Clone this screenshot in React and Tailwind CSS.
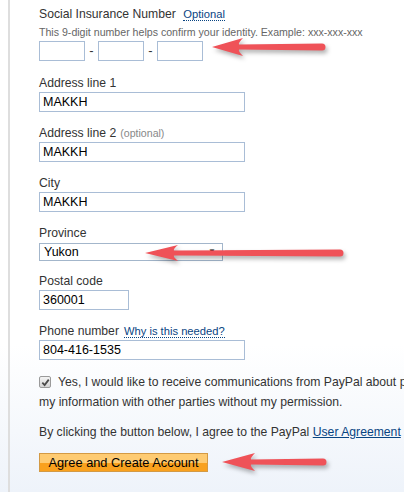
function Arrow({ tip, y, tail, len = 31, half = 9 }) {
  const b = tip + len;
  const d = `M${tip} ${y} L${b} ${y - half} Q${b - 5} ${y - 4} ${b - 4} ${y - 2.5} L${tail} ${y - 3.5} A3.5 3.5 0 0 1 ${tail} ${y + 3.5} L${b - 4} ${y + 2.5} Q${b - 5} ${y + 4} ${b} ${y + half} Z`;
  return <path d={d} fill="#ef5258" />;
}

function Field({ label, extra, value, width, className = "" }) {
  return (
    <div className={className}>
      <div className="h-[16px] leading-[16px] text-[12.2px] text-[#333] whitespace-nowrap">
        {label}
        {extra}
      </div>
      <input
        readOnly
        value={value}
        className="mt-[1px] block h-[20px] border border-[#a9bdd6] bg-white px-[3px] text-[12.5px] text-black outline-none"
        style={{ width }}
      />
    </div>
  );
}

export default function App() {
  return (
    <div
      className="relative w-[404px] h-[492px] overflow-hidden bg-gradient-to-b from-white from-[70%] to-[#eef3fa]"
      style={{ fontFamily: '"Liberation Sans", Arial, sans-serif' }}
    >
      <div className="ml-[8px] h-full border-l-2 border-[#dedede] pl-[29px] pt-[6px]">
        <div className="h-[16px] leading-[16px] text-[12.2px] text-[#333] whitespace-nowrap">
          Social Insurance Number{" "}
          <span className="ml-[4px] text-[11.2px] text-[#084482] border-b border-dotted border-[#084482]">
            Optional
          </span>
        </div>
        <div className="mt-[3px] h-[14px] leading-[14px] text-[10.6px] text-[#666] whitespace-nowrap">
          This 9-digit number helps confirm your identity. Example: xxx-xxx-xxx
        </div>
        <div className="mt-[2px] flex items-center text-[13px] text-[#333]">
          <input readOnly className="block h-[20px] w-[46px] border border-[#a9bdd6] bg-white outline-none" />
          <span className="w-[13px] text-center">-</span>
          <input readOnly className="block h-[20px] w-[46px] border border-[#a9bdd6] bg-white outline-none" />
          <span className="w-[13px] text-center">-</span>
          <input readOnly className="block h-[20px] w-[46px] border border-[#a9bdd6] bg-white outline-none" />
        </div>

        <Field className="mt-[14px]" label="Address line 1" value="MAKKH" width={206} />
        <Field
          className="mt-[13px]"
          label="Address line 2"
          extra={<span className="ml-[4px] text-[10.6px] text-[#888]">(optional)</span>}
          value="MAKKH"
          width={206}
        />
        <Field className="mt-[13px]" label="City" value="MAKKH" width={206} />

        <div className="mt-[13px]">
          <div className="h-[16px] leading-[16px] text-[12.2px] text-[#333]">Province</div>
          <div className="mt-[2px] flex h-[18px] w-[184px] items-center justify-between border border-[#a3b6cb] bg-white pl-[4px] pr-[6px] text-[12.5px] text-black">
            <span>Yukon</span>
            <span className="text-[8px] leading-none">▼</span>
          </div>
        </div>

        <Field className="mt-[12px]" label="Postal code" value="360001" width={90} />
        <Field
          className="mt-[13px]"
          label="Phone number"
          extra={
            <span className="ml-[5px] text-[11.2px] text-[#084482] border-b border-dotted border-[#084482]">
              Why is this needed?
            </span>
          }
          value="804-416-1535"
          width={206}
        />

        <div className="mt-[12px] text-[12.2px] leading-[20px] text-[#333] whitespace-nowrap">
          <div className="flex items-center">
            <span className="flex h-[12px] w-[12px] shrink-0 items-center justify-center rounded-[2px] border border-[#9a9a9a] bg-gradient-to-b from-[#f4f4f4] to-[#d4d4d4]">
              <svg width="9" height="9" viewBox="0 0 10 10">
                <path d="M1.5 5.2 L4 7.8 L8.6 1.8" fill="none" stroke="#4a4a4a" strokeWidth="2" />
              </svg>
            </span>
            <span className="ml-[7px]">
              Yes, I would like to receive communications from PayPal about products and services
            </span>
          </div>
          <div>my information with other parties without my permission.</div>
        </div>

        <div className="mt-[10px] text-[12.2px] leading-[20px] text-[#333] whitespace-nowrap">
          By clicking the button below, I agree to the PayPal{" "}
          <span className="text-[#084482] underline">User Agreement</span> and Privacy Policy.
        </div>

        <button className="mt-[11px] flex h-[19px] w-[169px] items-center justify-center border border-[#d39a45] bg-gradient-to-b from-[#fecb72] from-50% to-[#f9a11e] to-50% text-[12.8px] text-black">
          Agree and Create Account
        </button>
      </div>

      <svg
        className="pointer-events-none absolute left-0 top-0"
        width="404"
        height="492"
        style={{ filter: "drop-shadow(2px 3px 2px rgba(0,0,0,0.3))" }}
      >
        <Arrow tip={212} y={47} tail={322} len={31} half={9} />
        <Arrow tip={145} y={253} tail={340} len={33} half={8} />
        <Arrow tip={222} y={462} tail={323} len={33} half={9} />
      </svg>
    </div>
  );
}
